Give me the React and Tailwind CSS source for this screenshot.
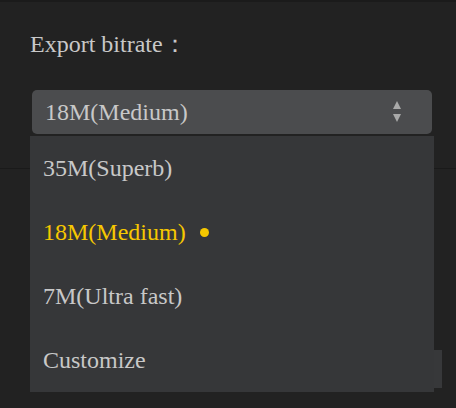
import React from "react";

export default function App() {
  const items = [
    { label: "35M(Superb)" },
    { label: "18M(Medium)", selected: true },
    { label: "7M(Ultra fast)" },
    { label: "Customize" },
  ];
  return (
    <div
      className="relative w-[456px] h-[408px] overflow-hidden bg-[#222222] border-t-2 border-[#1b1b1b] text-[#c8c8c8]"
      style={{ fontFamily: '"Liberation Serif", "Times New Roman", serif' }}
    >
      <div className="h-[167px] border-b border-[#1a1a1a] pt-[26px]">
        <div className="pl-[30px] text-[24px] leading-[32px] h-[32px]">Export bitrate：</div>
        <div className="mt-[30px] ml-[32px] w-[400px] h-[44px] rounded-[5px] bg-[#4b4c4e] flex items-center justify-between pl-[13px] pr-[30px]">
          <span className="text-[24px] leading-[44px]">18M(Medium)</span>
          <svg width="10" height="22" viewBox="0 0 10 22" className="text-[#a9a9a9]">
            <path d="M5 0 L9 8 L1 8 Z" fill="currentColor" />
            <path d="M1 13 L9 13 L5 21 Z" fill="currentColor" />
          </svg>
        </div>
      </div>
      <div className="flex justify-end pr-[14px] mt-[181px]">
        <div className="w-[80px] h-[38px] bg-[#37383a]" />
      </div>
      <div className="absolute left-[30px] top-[134px] w-[404px] h-[256px] bg-[#363739] flex flex-col">
        {items.map((it) => (
          <div
            key={it.label}
            className={
              "h-[64px] flex items-center pl-[13px] text-[24px] leading-[32px] " +
              (it.selected ? "text-[#f6c800]" : "text-[#c8c8c8]")
            }
          >
            <span>{it.label}</span>
            {it.selected && <span className="ml-[14px] w-[9px] h-[9px] rounded-full bg-[#f6c800]" />}
          </div>
        ))}
      </div>
    </div>
  );
}
